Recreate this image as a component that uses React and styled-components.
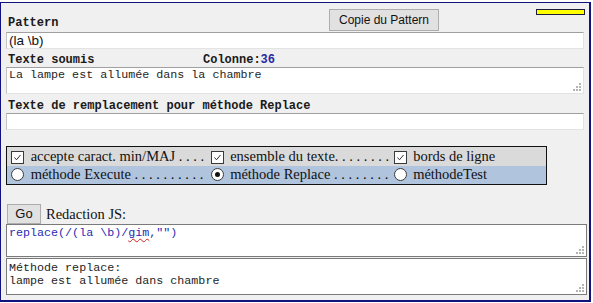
import React from "react";
import styled, { createGlobalStyle } from "styled-components";

const Global = createGlobalStyle`
  html, body { margin: 0; padding: 0; background: #ffffff; }
  body { font-family: "Liberation Serif", serif; }
  * { box-sizing: border-box; }
`;

const Frame = styled.div`
  margin-top: 2px;
  width: 591px;
  height: 300px;
  background: #f0f0f0;
  border-style: solid;
  border-color: #12127e;
  border-width: 1px 2px 2px 1px;
  padding: 0 0 0 5px;
  display: flex;
  flex-direction: column;
`;

const Header = styled.div`
  display: flex;
  align-items: flex-start;
  width: 579px;
  height: 29px;
`;

const Label = styled.div`
  font-family: "Liberation Mono", "Courier New", monospace;
  font-weight: bold;
  font-size: 12px;
  line-height: 14px;
  color: #1a1a1a;
  padding-left: 2px;
  margin-top: ${(p) => p.$top || 0}px;
  white-space: nowrap;
`;

const Button = styled.button`
  font-family: "Liberation Sans", Arial, sans-serif;
  font-size: ${(p) => p.$size || 12}px;
  color: #111;
  background: #e1e1e1;
  border: 1px solid #adadad;
  padding: 0;
  margin: 0;
  width: ${(p) => p.$w}px;
  height: ${(p) => p.$h}px;
  line-height: ${(p) => p.$h - 2}px;
`;

const CopyButton = styled(Button)`
  margin-left: auto;
  margin-top: 6px;
`;

const Marker = styled.div`
  margin-left: 97px;
  margin-top: 6px;
  width: 49px;
  height: 6px;
  background: #ffff00;
  border: 1px solid #1c1c3c;
`;

const Input = styled.input`
  display: block;
  width: 578px;
  height: 17px;
  margin: 0;
  padding: 0 2px;
  background: #ffffff;
  border: 1px solid #e3e3e3;
  border-top-color: #a0a0a0;
  border-left-color: #c4c4c4;
  font-family: "Liberation Sans", Arial, sans-serif;
  font-size: 13.5px;
  color: #111;
  outline: none;
`;

const LabelRow = styled.div`
  display: grid;
  grid-template-columns: 195px auto;
  height: ${(p) => p.$h}px;
  padding-top: ${(p) => p.$pt}px;
  width: 578px;
`;

const Count = styled.span`
  color: #2a2aa0;
`;

const Box = styled.div`
  position: relative;
  width: ${(p) => p.$w}px;
  height: ${(p) => p.$h}px;
  margin-top: ${(p) => p.$mt || 0}px;
  background: #ffffff;
  border: 1px solid ${(p) => (p.$dark ? "#7a7a7a" : "#e3e3e3")};
  border-top-color: ${(p) => (p.$dark ? "#7a7a7a" : "#a0a0a0")};
  border-left-color: ${(p) => (p.$dark ? "#7a7a7a" : "#c4c4c4")};
  padding: ${(p) => p.$pad || "1px 2px"};
  font-family: "Liberation Mono", "Courier New", monospace;
  font-size: 11.7px;
  line-height: 13px;
  color: ${(p) => p.$color || "#1e1e1e"};
  white-space: pre;
  overflow: hidden;
`;

const GripWrap = styled.span`
  position: absolute;
  right: 2px;
  bottom: 2px;
  width: 9px;
  height: 9px;
  line-height: 0;
`;

const Grip = () => (
  <GripWrap>
    <svg width="9" height="9" viewBox="0 0 9 9">
      <g fill="#b4b4b4">
        <rect x="7" y="1" width="2" height="2" />
        <rect x="4" y="4" width="2" height="2" />
        <rect x="7" y="4" width="2" height="2" />
        <rect x="1" y="7" width="2" height="2" />
        <rect x="4" y="7" width="2" height="2" />
        <rect x="7" y="7" width="2" height="2" />
      </g>
    </svg>
  </GripWrap>
);

const Squiggle = styled.span`
  text-decoration: underline wavy #d02020;
  text-decoration-thickness: 1px;
  text-underline-offset: 2px;
`;

const Options = styled.table`
  margin-top: 16px;
  width: 541px;
  border: 1px solid #111;
  border-collapse: collapse;
  border-spacing: 0;
  table-layout: fixed;
  font-family: "Liberation Serif", "Times New Roman", serif;
  font-size: 14.5px;
  color: #111;
`;

const Row = styled.tr`
  background: ${(p) => (p.$alt ? "#b0c4de" : "#dadada")};
  height: 19px;
`;

const Cell = styled.td`
  padding: 0;
  height: 19px;
  line-height: 17px;
  white-space: nowrap;
  overflow: hidden;
  width: ${(p) => (p.$w ? `${p.$w}px` : "auto")};
`;

const Control = styled.span`
  display: inline-block;
  vertical-align: -2px;
  width: 13px;
  height: 13px;
  margin: 0 3px 0 4px;
  background: #fff;
  border: 1px solid #3a3a3a;
  border-radius: ${(p) => (p.$round ? "50%" : "0")};
  line-height: 0;
  position: relative;
`;

const Dot = styled.span`
  position: absolute;
  left: 3px;
  top: 3px;
  width: 5px;
  height: 5px;
  border-radius: 50%;
  background: #111;
`;

const Check = () => (
  <Control>
    <svg width="11" height="11" viewBox="0 0 11 11">
      <path d="M2.5 5.5 L4.5 7.8 L8.5 3" fill="none" stroke="#333" strokeWidth="1" />
    </svg>
  </Control>
);

const Radio = ({ on }) => <Control $round>{on && <Dot />}</Control>;

const GoRow = styled.div`
  display: flex;
  align-items: center;
  margin-top: 19px;
  padding-left: 1px;
  height: 20px;
  font-family: "Liberation Serif", "Times New Roman", serif;
  font-size: 14.5px;
  color: #111;
`;

const GoText = styled.span`
  margin-left: 5px;
`;

export default function App() {
  return (
    <>
      <Global />
      <Frame>
        <Header>
          <Label $top={13}>Pattern</Label>
          <CopyButton $w={110} $h={22}>Copie du Pattern</CopyButton>
          <Marker />
        </Header>
        <Input defaultValue="(la \b)" readOnly />
        <LabelRow $h={18} $pt={4}>
          <Label>Texte soumis</Label>
          <Label>
            Colonne:<Count>36</Count>
          </Label>
        </LabelRow>
        <Box $w={578} $h={27} $pad="1px 2px">
          La lampe est allumée dans la chambre
          <Grip />
        </Box>
        <LabelRow $h={19} $pt={5}>
          <Label>Texte de remplacement pour méthode Replace</Label>
        </LabelRow>
        <Input defaultValue="" readOnly />
        <Options>
          <tbody>
            <Row>
              <Cell $w={200}>
                <Check /> accepte caract. min/MAJ . . . .
              </Cell>
              <Cell $w={183}>
                <Check /> ensemble du texte. . . . . . . .
              </Cell>
              <Cell>
                <Check /> bords de ligne
              </Cell>
            </Row>
            <Row $alt>
              <Cell>
                <Radio /> méthode Execute . . . . . . . . . .
              </Cell>
              <Cell>
                <Radio on /> méthode Replace . . . . . . . .
              </Cell>
              <Cell>
                <Radio /> méthodeTest
              </Cell>
            </Row>
          </tbody>
        </Options>
        <GoRow>
          <Button $w={34} $h={20} $size={13}>Go</Button>
          <GoText>Redaction JS:</GoText>
        </GoRow>
        <Box $w={581} $h={33} $dark $color="#2a2ab4" $pad="2px 2px">
          replace(/(la \b)/<Squiggle>gim</Squiggle>,"")
          <Grip />
        </Box>
        <Box $w={581} $h={37} $mt={1} $dark $pad="3px 2px">
          {"Méthode replace:\nlampe est allumée dans chambre"}
          <Grip />
        </Box>
      </Frame>
    </>
  );
}
